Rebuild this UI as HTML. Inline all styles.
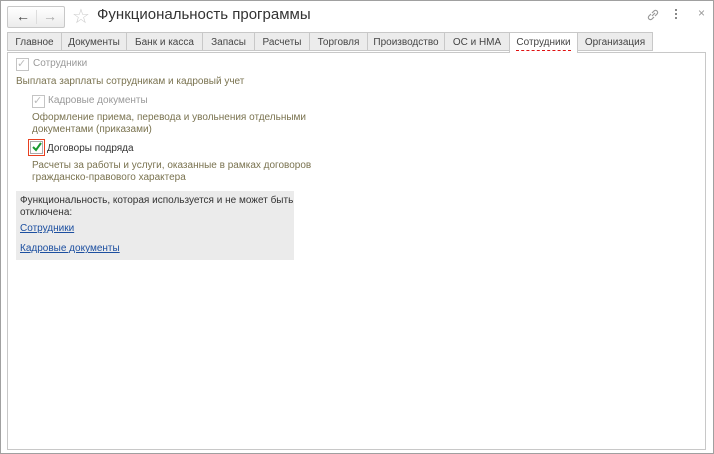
<!DOCTYPE html>
<html><head><meta charset="utf-8"><style>
body{margin:0;width:714px;height:454px;background:#fff;font-family:"Liberation Sans",Arial,sans-serif;position:relative;overflow:hidden}
.win{position:absolute;left:0;top:0;width:712px;height:452px;border:1px solid #a0a0a0;background:#fff}
.nav{position:absolute;left:6px;top:5px;width:56px;height:20px;border:1px solid #c8c8c8;border-radius:2px;background:linear-gradient(#fff,#ececec)}
.nav span{position:absolute;top:1px;font-size:14px;color:#444}
.title{position:absolute;left:96px;top:5px;font-size:15px;color:#333}
.tabs{position:absolute;left:6px;top:31px;height:20px}
.tab{position:absolute;top:0;height:19px;border:1px solid #c8c8c8;background:#ececec;font-size:10px;color:#444;line-height:19px;text-align:center;box-sizing:border-box}
.tab.act{background:#fff;border-bottom:none;height:21px;z-index:2}
.panel{position:absolute;left:6px;top:51px;width:697px;height:396px;border:1px solid #c8c8c8;background:#fff}
.t{position:absolute;font-size:10px;white-space:nowrap}
.g{color:#999}.o{color:#7a7350}.d{color:#333}
.cb{position:absolute;width:11px;height:11px;border:1px solid #c4c4c4;background:#fff}
.box{position:absolute;left:15px;top:190px;width:278px;height:69px;background:#ebebeb}
a{color:#1c4fa0;text-decoration:underline}
</style></head><body>
<div class="win">
<div class="nav"><span style="left:8px">&#8592;</span><span style="left:35px;color:#aaa">&#8594;</span><div style="position:absolute;left:28px;top:3px;width:1px;height:14px;background:#ddd"></div></div>
<div style="position:absolute;left:71px;top:3px;font-size:20px;color:#ccc">☆</div>
<div class="title">Функциональность программы</div>
<svg style="position:absolute;left:645px;top:7px" width="14" height="14" viewBox="0 0 14 14" fill="none" stroke="#999" stroke-width="1.2"><path d="M6 8 L9 5 M5 6 L3 8 a2 2 0 0 0 3 3 L8 9 M9 8 L11 6 a2 2 0 0 0 -3 -3 L6 5"/></svg>
<div style="position:absolute;left:674px;top:8px;width:2px;height:2px;background:#888;box-shadow:0 4px #888,0 8px #888"></div>
<div style="position:absolute;left:697px;top:5px;font-size:12px;color:#999">×</div>
<div class="tabs">
<div class="tab" style="left:0;width:55px">Главное</div>
<div class="tab" style="left:54px;width:66px">Документы</div>
<div class="tab" style="left:119px;width:77px">Банк и касса</div>
<div class="tab" style="left:195px;width:53px">Запасы</div>
<div class="tab" style="left:247px;width:56px">Расчеты</div>
<div class="tab" style="left:302px;width:59px">Торговля</div>
<div class="tab" style="left:360px;width:78px">Производство</div>
<div class="tab" style="left:437px;width:66px">ОС и НМА</div>
<div class="tab act" style="left:502px;width:69px">Сотрудники<div style="position:absolute;left:6px;right:6px;top:17px;border-top:1px dashed #e01010"></div></div>
<div class="tab" style="left:570px;width:76px">Организация</div>
</div>
<div class="panel"></div>
<div class="cb" style="left:15px;top:57px"></div><div class="t" style="left:16px;top:56px;color:#bbb;font-size:11px">✓</div>
<div class="t g" style="left:32px;top:57px">Сотрудники</div>
<div class="t o" style="left:15px;top:75px">Выплата зарплаты сотрудникам и кадровый учет</div>
<div class="cb" style="left:31px;top:94px"></div><div class="t" style="left:32px;top:93px;color:#bbb;font-size:11px">✓</div>
<div class="t g" style="left:47px;top:94px">Кадровые документы</div>
<div class="t o" style="left:31px;top:111px">Оформление приема, перевода и увольнения отдельными</div>
<div class="t o" style="left:31px;top:123px">документами (приказами)</div>
<div style="position:absolute;left:27px;top:138px;width:17px;height:17px;border:1px solid #e84020;box-sizing:border-box"></div>
<div class="cb" style="left:29px;top:140px;border-color:#aaa"></div>
<svg style="position:absolute;left:30px;top:140px" width="12" height="12"><path d="M2 6 L5 9 L10 2" stroke="#1a9a30" stroke-width="2" fill="none"/></svg>
<div class="t d" style="left:46px;top:142px">Договоры подряда</div>
<div class="t o" style="left:31px;top:159px">Расчеты за работы и услуги, оказанные в рамках договоров</div>
<div class="t o" style="left:31px;top:171px">гражданско-правового характера</div>
<div class="box"></div>
<div class="t d" style="left:19px;top:194px">Функциональность, которая используется и не может быть</div>
<div class="t d" style="left:19px;top:206px">отключена:</div>
<div class="t" style="left:19px;top:222px"><a>Сотрудники</a></div>
<div class="t" style="left:19px;top:242px"><a>Кадровые документы</a></div>
</div>
</body></html>
